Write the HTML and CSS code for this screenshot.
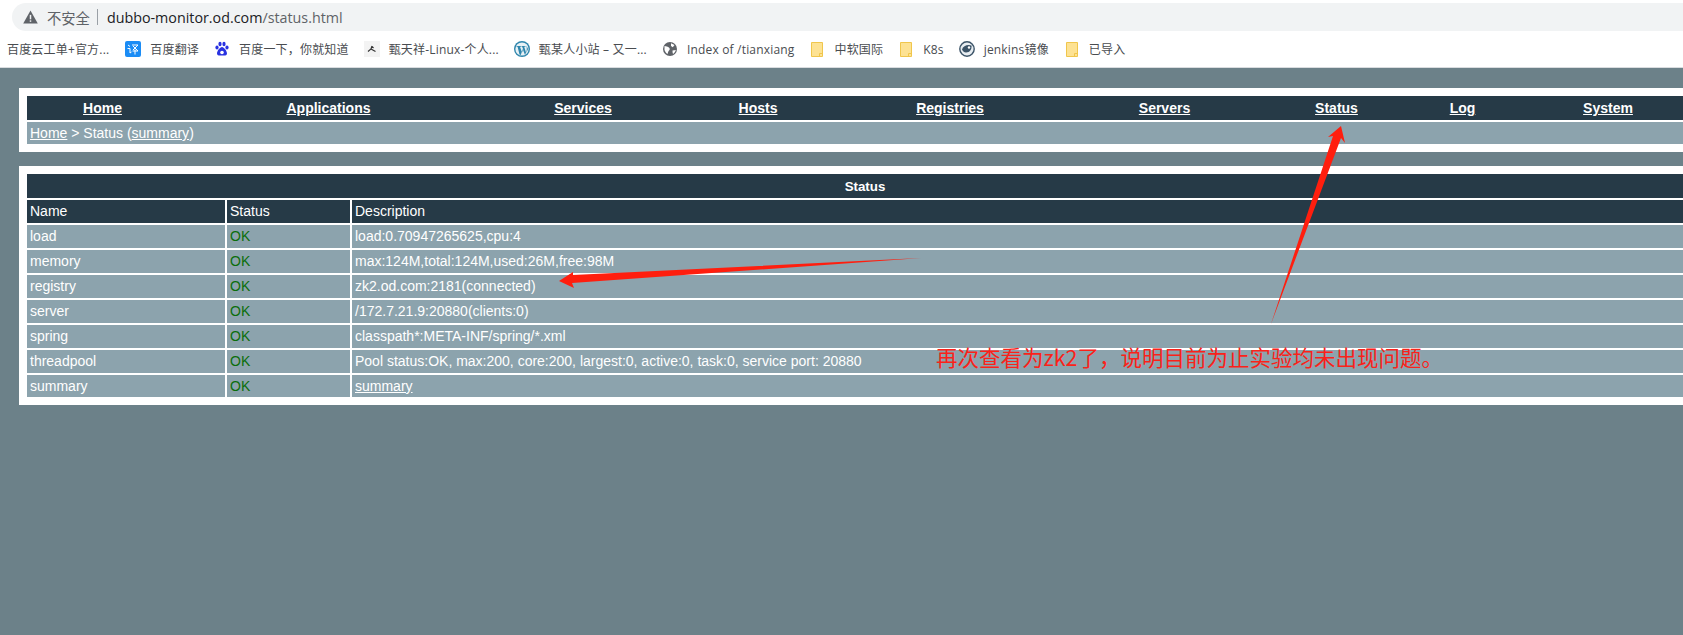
FILE: index.html
```html
<!DOCTYPE html>
<html>
<head>
    <title>Status</title>
    <link rel="stylesheet" href="styles.css">
</head>
<body>
    <div class="chrome">
        <div class="address">
            <svg class="warn" width="15" height="14" viewBox="0 0 14 13"><path d="M7 0.5 L13.8 12.5 H0.2 Z" fill="#5f6368"/><rect x="6.3" y="4.5" width="1.4" height="4.2" fill="#f1f3f4"/><rect x="6.3" y="9.6" width="1.4" height="1.4" fill="#f1f3f4"/></svg>
            <span class="insecure">不安全</span>
            <span class="sep"></span>
            <span class="url"><b>dubbo-monitor.od.com</b>/status.html</span>
        </div>
        <div class="bookmarks">
            <span class="mark first">百度云工单+官方...</span>
            <span class="mark"><svg width="16" height="16" viewBox="0 0 16 16"><rect width="16" height="16" rx="2" fill="#1b8cf5"/><path d="M3 4 L5 5.5 M2.5 7.5 H5 V12 L6.5 11 M7 4 H13 L8 9 M8 5 L13 10 M7.5 10 H13 M10 8.5 V13.5" stroke="#fff" stroke-width="1" fill="none"/></svg>百度翻译</span>
            <span class="mark"><svg width="16" height="16" viewBox="0 0 16 16"><g fill="#2932e1"><ellipse cx="3" cy="6.5" rx="1.6" ry="2"/><ellipse cx="6" cy="3" rx="1.6" ry="2.2"/><ellipse cx="10" cy="3" rx="1.6" ry="2.2"/><ellipse cx="13" cy="6.5" rx="1.6" ry="2"/><path d="M8 6 C10 6 13 10 13 12.5 C13 15 10 14.5 8 14.5 C6 14.5 3 15 3 12.5 C3 10 6 6 8 6 Z"/></g><circle cx="8" cy="11.5" r="1.8" fill="#fff"/></svg>百度一下，你就知道</span>
            <span class="mark"><svg width="16" height="16" viewBox="0 0 16 16"><rect width="16" height="16" fill="#f3f3f3"/><path d="M8 5 L7 8 L4 10.5 M7 8 L11.5 10.5 M8 5.5 L9.5 7" stroke="#333" stroke-width="1.2" fill="none"/></svg>甄天祥-Linux-个人...</span>
            <span class="mark"><svg width="16" height="16" viewBox="0 0 16 16"><circle cx="8" cy="8" r="8" fill="#2f86ad"/><circle cx="8" cy="8" r="6.6" fill="#e8f1f5"/><path d="M2.5 5 H7 V5.8 H6 L8 11.5 L9.2 8.5 L8.2 5.8 H7.5 V5 H11.5 V5.8 H10.2 L12 11.5 L11 14 L8.7 8 L6.8 14 L5.5 13.6 L3.6 5.8 H2.5 Z" fill="#2f86ad"/><path d="M12.6 4.8 L14 8 L12.4 12 L12.8 8 Z" fill="#2f86ad"/></svg>甄某人小站 – 又一...</span>
            <span class="mark"><svg width="16" height="16" viewBox="0 0 16 16"><circle cx="8" cy="8" r="7" fill="#5f6368"/><path d="M2.5 5 C4 5.5 6 5.5 7.2 6.8 C8 7.8 8 9 6.8 9.8 C6 10.5 6 12 5.5 13 C4 12 3 10.5 2.5 9 Z M9 2.2 L12.5 4 L10.8 6.2 L9 5 Z M10.5 9.5 L13.8 9 C13.4 10.6 12.4 12 11 13 C10.6 11.8 10.4 10.6 10.5 9.5 Z" fill="#fff"/></svg>Index of /tianxiang</span>
            <span class="mark"><svg class="folder" width="12" height="15" viewBox="0 0 12 15"><path d="M.5 .5 H11.5 V14.5 H.5 Z" fill="#fde293" stroke="#f0c64c"/><path d="M8.5 14.5 V11.5 H11.5" fill="none" stroke="#f0c64c"/></svg>中软国际</span>
            <span class="mark"><svg class="folder" width="12" height="15" viewBox="0 0 12 15"><path d="M.5 .5 H11.5 V14.5 H.5 Z" fill="#fde293" stroke="#f0c64c"/><path d="M8.5 14.5 V11.5 H11.5" fill="none" stroke="#f0c64c"/></svg>K8s</span>
            <span class="mark"><svg width="16" height="16" viewBox="0 0 16 16"><circle cx="8" cy="8" r="7.2" fill="#e8edf1" stroke="#3c5468" stroke-width="1.4"/><path d="M3 8.5 C4 4.5 9 3 12.5 4.5 C13 8 11 11.5 7 11.5 C5 11.5 3.5 10 3 8.5 Z" fill="#3c5468"/><circle cx="10" cy="6.5" r="1.2" fill="#fff"/></svg>jenkins镜像</span>
            <span class="mark"><svg class="folder" width="12" height="15" viewBox="0 0 12 15"><path d="M.5 .5 H11.5 V14.5 H.5 Z" fill="#fde293" stroke="#f0c64c"/><path d="M8.5 14.5 V11.5 H11.5" fill="none" stroke="#f0c64c"/></svg>已导入</span>
        </div>
    </div>

    <div class="page">
        <div class="box">
            <div class="nav">
                <a href="#">Home</a>
                <a href="#">Applications</a>
                <a href="#">Services</a>
                <a href="#">Hosts</a>
                <a href="#">Registries</a>
                <a href="#">Servers</a>
                <a href="#">Status</a>
                <a href="#">Log</a>
                <a href="#">System</a>
            </div>
            <div class="crumb"><a href="#">Home</a> &gt; Status (<a href="#">summary</a>)</div>
        </div>

        <div class="box">
            <table class="status">
                <colgroup><col class="c-name"><col class="c-status"><col></colgroup>
                <tr><th class="title" colspan="3">Status</th></tr>
                <tr class="head"><td>Name</td><td>Status</td><td>Description</td></tr>
                <tr><td>load</td><td class="ok">OK</td><td>load:0.70947265625,cpu:4</td></tr>
                <tr><td>memory</td><td class="ok">OK</td><td>max:124M,total:124M,used:26M,free:98M</td></tr>
                <tr><td>registry</td><td class="ok">OK</td><td>zk2.od.com:2181(connected)</td></tr>
                <tr><td>server</td><td class="ok">OK</td><td>/172.7.21.9:20880(clients:0)</td></tr>
                <tr><td>spring</td><td class="ok">OK</td><td>classpath*:META-INF/spring/*.xml</td></tr>
                <tr><td>threadpool</td><td class="ok">OK</td><td>Pool status:OK, max:200, core:200, largest:0, active:0, task:0, service port: 20880</td></tr>
                <tr class="last"><td>summary</td><td class="ok">OK</td><td><a href="#">summary</a></td></tr>
            </table>
        </div>
    </div>

    <svg class="overlay" width="1683" height="635" viewBox="0 0 1683 635">
        <path d="M921 258 L573 275 L573 272 L559 281 L574 288 L572 283 Z" fill="#ff1e0e"/>
        <path d="M1271 324 L1333 136 L1328 137 L1341 126 L1345 143 L1341 138 Z" fill="#ff1e0e"/>
        <text class="note" x="936" y="366">再次查看为zk2了，说明目前为止实验均未出现问题。</text>
    </svg>
</body>
</html>
```
FILE: styles.css
```css
html, body { margin: 0; padding: 0; height: 100%; overflow: hidden; }
body { position: relative; width: 1683px; background: #6c8189; font-family: "Liberation Sans", Arial, sans-serif; font-size: 14px; color: #fff; }

.chrome { height: 64px; padding-top: 3px; background: #fff; border-bottom: 1px solid #d9dcdf; color: #444; }
.address { display: flex; align-items: center; height: 28px; margin-left: 12px; padding-left: 11px; background: #f1f3f4; border-radius: 14px 0 0 14px; font-size: 14.3px; font-family: "Open Sans", "Noto Sans CJK SC", sans-serif; color: #5f6368; }
.warn { margin-right: 9px; }
.sep { width: 1px; height: 16px; margin: 0 9px 0 7px; background: #9aa0a6; }
.url b { font-weight: normal; color: #202124; }
.bookmarks { display: flex; align-items: center; gap: 15px; height: 36px; padding-left: 7px; font-size: 12px; letter-spacing: .18px; font-family: "Open Sans", "Noto Sans CJK SC", sans-serif; color: #494c50; white-space: nowrap; }
.mark { display: flex; align-items: center; gap: 9px; }
.first { margin-right: 1px; }
.folder { margin: 0 2px; }

.page { width: 1720px; padding: 20px 0 0 19px; }
.box { padding: 8px 0 8px 8px; margin-bottom: 14px; background: #fff; }

.nav { display: grid; grid-template-columns: 151px 301px 208px 142px 242px 187px 157px 95px 196px; align-items: center; justify-items: center; height: 24px; background: #263a47; font-weight: bold; font-size: 14px; }
.nav a, .crumb a, .status a { color: #fff; }
.crumb { height: 22px; line-height: 22px; margin-top: 2px; padding-left: 3px; background: #8ca3ad; }

.status { width: 1676px; margin: -2px 0; border-collapse: separate; border-spacing: 0 2px; table-layout: fixed; font-size: 14px; }
.status td { height: 22px; padding: 0 3px 1px; background: #8ca3ad; border-left: 2px solid #fff; }
.status td:first-child { border-left: 0; }
.status .title { height: 24px; padding: 0; background: #263a47; font-weight: bold; font-size: 13.33px; }
.status .head td { background: #263a47; }
.status .last td { height: 21px; }
.c-name { width: 198px; }
.c-status { width: 125px; }
.status .ok { color: #0b6e0b; }

.overlay { position: absolute; left: 0; top: 0; }
.note { font-family: "Noto Sans CJK SC", sans-serif; font-size: 21.5px; font-weight: 400; fill: #fa2219; }
```
